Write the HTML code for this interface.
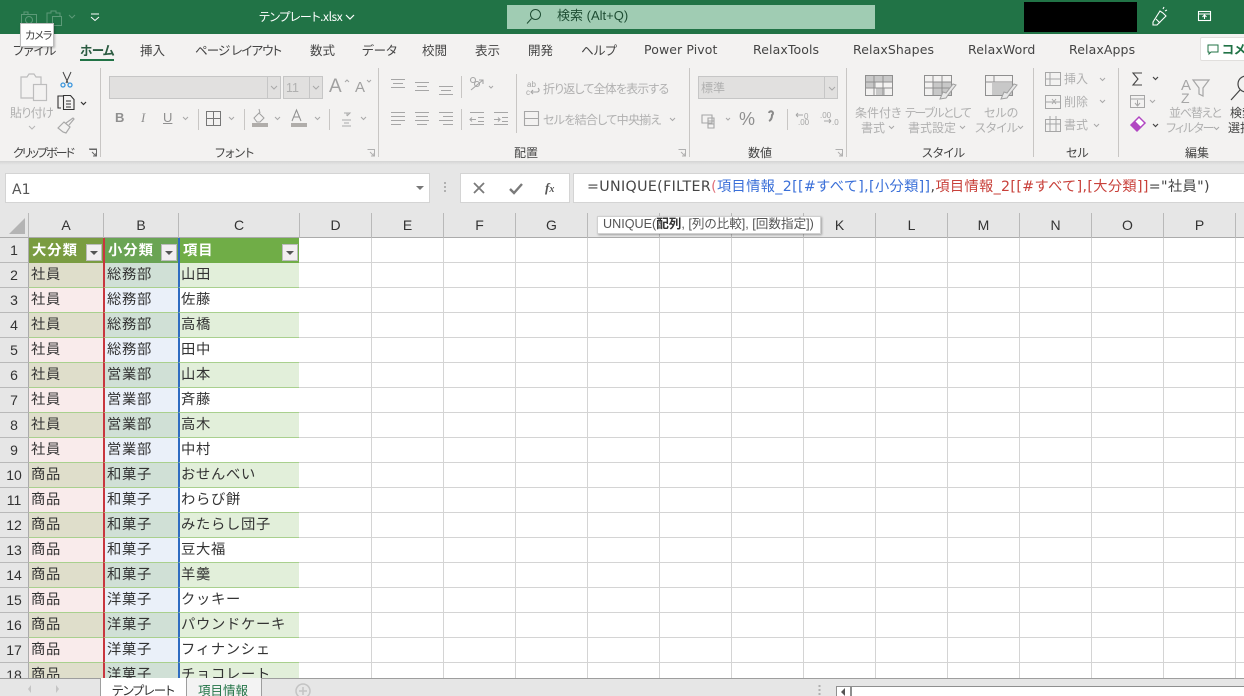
<!DOCTYPE html>
<html lang="ja"><head><meta charset="utf-8"><title>テンプレート.xlsx</title>
<style>
*{box-sizing:border-box}
html,body{margin:0;padding:0;width:1244px;height:696px;overflow:hidden;background:#fff}
body{position:relative;font-family:"Liberation Sans","Noto Sans CJK JP",sans-serif;color:#333}
.a{position:absolute}
.t{position:absolute;white-space:nowrap;line-height:16px;font-family:"Noto Sans CJK JP",sans-serif;font-feature-settings:"palt";font-size:12px}
.tab{font-size:12.5px;color:#444;top:42px}
.en{font-family:"DejaVu Sans",sans-serif;font-size:12.5px;font-feature-settings:normal;letter-spacing:.1px}
.g{color:#b0b0b0}
.lbl{top:145px;color:#444;font-size:12px}
.sep{position:absolute;width:1px;background:#c8c6c4}
.ch{position:absolute;top:213px;height:25px;line-height:25px;text-align:center;font-size:14px;color:#333;font-family:"Liberation Sans",sans-serif;border-right:1px solid #b9b9b9}
.rh{position:absolute;left:0;width:29px;height:25px;line-height:24px;text-align:center;font-size:14px;color:#333;background:#e6e6e6;border-bottom:1px solid #b9b9b9;border-right:1px solid #ababab;font-family:"Liberation Sans",sans-serif}
table{position:absolute;left:29px;top:238px;border-collapse:separate;border-spacing:0;table-layout:fixed;width:270px}
td{height:25px;padding:0 0 2px 2px;font-family:"Noto Sans CJK JP",sans-serif;font-size:14.3px;letter-spacing:.7px;line-height:22px;white-space:nowrap;overflow:hidden;border-bottom:1px solid #a9d08e;color:#333;position:relative}
.x1{background:#dfdecb}.x2{background:#f9ebeb}.y1{background:#d0e0d6;border-left:2px solid #c8363f;padding-left:2px}.y2{background:#eaf0f9;border-left:2px solid #c8363f;padding-left:2px}
.z1{background:#e2efda;border-left:2px solid #2f6cc1;padding-left:1px}.z2{background:#fff;border-left:2px solid #2f6cc1;padding-left:1px}
th{height:25px;padding:0 0 2px 3px;text-align:left;font-family:"Noto Sans CJK JP",sans-serif;font-size:14.3px;letter-spacing:1px;font-weight:700;color:#fff;position:relative;line-height:22px;overflow:hidden}
.fb{position:absolute;right:1px;top:6px;width:16px;height:17px;background:#f2eef0;border:1px solid #bbb}
.fb:after{content:"";position:absolute;left:3px;top:6px;border:4px solid transparent;border-top:4px solid #555;border-bottom:0}
</style></head><body>

<!-- title bar -->
<div class="a" style="left:0;top:0;width:1244px;height:34px;background:#217346"></div>
<div class="a" style="left:507px;top:5px;width:368px;height:24px;background:#a0ccb3"></div>
<div class="a" style="left:1024px;top:2px;width:113px;height:30px;background:#000"></div>
<div class="t" style="left:259px;top:9px;color:#fff;font-size:12px;letter-spacing:-.45px">テンプレート.xlsx</div>
<div class="t" style="left:557px;top:8px;color:#1e4d33;font-size:13px;font-family:'Liberation Sans','Noto Sans CJK JP',sans-serif;">検索 (Alt+Q)</div>

<!-- ribbon -->
<div class="a" style="left:0;top:34px;width:1244px;height:127px;background:#f3f2f1"></div>
<div class="a" style="left:0;top:161px;width:1244px;height:517px;background:#e6e6e6"></div>
<div class="a" style="left:0;top:161px;width:1244px;height:4px;background:linear-gradient(#d4d4d4,#e6e6e6)"></div>

<div class="t tab" style="left:13px">ファイル</div>
<div class="t tab" style="left:80px;font-weight:700;color:#2b5b41;letter-spacing:-.6px">ホーム</div>
<div class="a" style="left:80px;top:59px;width:34px;height:2px;background:#217346"></div>
<div class="t tab" style="left:140px">挿入</div>
<div class="t tab" style="left:195px;letter-spacing:-.9px">ページ レイアウト</div>
<div class="t tab" style="left:310px">数式</div>
<div class="t tab" style="left:362px">データ</div>
<div class="t tab" style="left:422px">校閲</div>
<div class="t tab" style="left:475px">表示</div>
<div class="t tab" style="left:528px">開発</div>
<div class="t tab" style="left:581px">ヘルプ</div>
<div class="t tab en" style="left:644px">Power Pivot</div>
<div class="t tab en" style="left:753px">RelaxTools</div>
<div class="t tab en" style="left:853px">RelaxShapes</div>
<div class="t tab en" style="left:968px">RelaxWord</div>
<div class="t tab en" style="left:1069px">RelaxApps</div>
<div class="a" style="left:1200px;top:37px;width:50px;height:24px;background:#fff;border:1px solid #e1dfdd;border-radius:2px"></div>
<div class="t" style="left:1222px;top:41px;font-weight:700;color:#217346;font-size:12.5px">コメント</div>

<!-- separators -->
<div class="sep" style="left:100px;top:68px;height:89px"></div>
<div class="sep" style="left:378px;top:68px;height:89px"></div>
<div class="sep" style="left:689px;top:68px;height:89px"></div>
<div class="sep" style="left:846px;top:68px;height:89px"></div>
<div class="sep" style="left:1033px;top:68px;height:89px"></div>
<div class="sep" style="left:1118px;top:68px;height:89px"></div>
<div class="sep" style="left:198px;top:109px;height:21px"></div>
<div class="sep" style="left:244px;top:109px;height:21px"></div>
<div class="sep" style="left:329px;top:109px;height:21px"></div>
<div class="sep" style="left:461px;top:76px;height:22px"></div>
<div class="sep" style="left:461px;top:109px;height:21px"></div>
<div class="sep" style="left:516px;top:74px;height:59px"></div>
<div class="sep" style="left:787px;top:109px;height:21px"></div>

<!-- combo boxes -->
<div class="a" style="left:109px;top:76px;width:172px;height:23px;background:#e1e0df;border:1px solid #c6c6c6"></div>
<div class="a" style="left:267px;top:76px;width:1px;height:23px;background:#c6c6c6"></div>
<div class="a" style="left:283px;top:76px;width:40px;height:23px;background:#e1e0df;border:1px solid #c6c6c6"></div>
<div class="a" style="left:309px;top:76px;width:1px;height:23px;background:#c6c6c6"></div>
<div class="t g" style="left:286px;top:80px;font-family:'Liberation Sans',sans-serif;font-size:12.5px">11</div>
<div class="a" style="left:698px;top:76px;width:140px;height:23px;background:#e1e0df;border:1px solid #c6c6c6"></div>
<div class="a" style="left:824px;top:76px;width:1px;height:23px;background:#c6c6c6"></div>
<div class="t g" style="left:701px;top:80px">標準</div>

<!-- ribbon text -->
<div class="t g" style="left:10px;top:105px;letter-spacing:-.7px">貼り付け</div>
<div class="t g" style="left:115px;top:110px;font:700 13px 'Liberation Sans',sans-serif;line-height:16px;color:#8f8f8f">B</div>
<div class="t g" style="left:141px;top:110px;font:italic 13px 'Liberation Serif',serif;line-height:16px;color:#8f8f8f">I</div>
<div class="t g" style="left:163px;top:110px;font:13px 'Liberation Sans',sans-serif;line-height:16px;color:#8f8f8f;text-decoration:underline">U</div>
<div class="t g" style="left:329px;top:78px;font:19px 'Liberation Sans',sans-serif;line-height:18px;color:#a0a0a0">A</div>
<div class="t g" style="left:355px;top:79px;font:15px 'Liberation Sans',sans-serif;line-height:18px;color:#a0a0a0">A</div>
<div class="t g" style="left:543px;top:81px;letter-spacing:-.85px">折り返して全体を表示する</div>
<div class="t g" style="left:543px;top:112px;letter-spacing:-.7px">セルを結合して中央揃え</div>
<div class="t g" style="left:739px;top:108px;font:18px 'Liberation Sans',sans-serif;line-height:22px;color:#8f8f8f">%</div>
<div class="t g" style="left:855px;top:105px">条件付き</div>
<div class="t g" style="left:861px;top:120px">書式</div>
<div class="t g" style="left:905px;top:105px;letter-spacing:-1.4px">テーブルとして</div>
<div class="t g" style="left:908px;top:120px">書式設定</div>
<div class="t g" style="left:984px;top:105px">セルの</div>
<div class="t g" style="left:975px;top:120px">スタイル</div>
<div class="t g" style="left:1064px;top:71px">挿入</div>
<div class="t g" style="left:1064px;top:94px">削除</div>
<div class="t g" style="left:1064px;top:117px">書式</div>
<div class="t g" style="left:1169px;top:105px;letter-spacing:-1.2px">並べ替えと</div>
<div class="t g" style="left:1166px;top:120px;letter-spacing:-1px">フィルター</div>
<div class="t" style="left:1230px;top:105px;color:#444">検索と</div>
<div class="t" style="left:1228px;top:120px;color:#444">選択</div>

<div class="t lbl" style="left:13px;letter-spacing:-2px">クリップボード</div>
<div class="t lbl" style="left:215px">フォント</div>
<div class="t lbl" style="left:514px">配置</div>
<div class="t lbl" style="left:748px">数値</div>
<div class="t lbl" style="left:922px">スタイル</div>
<div class="t lbl" style="left:1066px">セル</div>
<div class="t lbl" style="left:1185px">編集</div>

<!-- icons -->
<svg class="a" style="left:0;top:0" width="1244" height="165" viewBox="0 0 1244 165" fill="none">
 <!-- QAT -->
 <g stroke="#5d9a78" stroke-width="1">
  <rect x="21.5" y="14.5" width="15" height="12"/><circle cx="29" cy="20" r="3.5"/><path d="M24 14v-2h4v2"/>
  <path d="M49 25h-2V13h4v-2h5v2h4v3"/><rect x="52.5" y="16.5" width="9" height="9"/>
  <path d="M69 15l3 3 3-3"/>
 </g>
 <g stroke="#fff" stroke-width="1"><path d="M91 14h8M91 17l4 3.500 4-3.500"/><path d="M346 15l4 4 4-4" stroke-width="1.200"/></g>
 <!-- search icon -->
 <g stroke="#1e4d33" stroke-width="1"><circle cx="535.500" cy="14.500" r="5"/><path d="M531.500 18.500l-4.500 5"/></g>
 <!-- pen + window -->
 <g stroke="#fff" stroke-width="1.100"><path d="M1153 22l7-11 3 2 3 3-9 9-4 0zM1156 19l4 4M1163 9l1-2M1165 11l2-1"/>
 <rect x="1198.500" y="11.500" width="12" height="9"/><path d="M1198 14h13M1204.500 19v-4M1202.500 17l2-2 2 2"/></g>
 <!-- comment -->
 <path d="M1208 45h10v7h-7l-2 2v-2h-1z" stroke="#217346"/>
 <!-- clipboard -->
 <g stroke="#bdbdbd" stroke-width="1.200">
  <path d="M33 98H21V77h6l2-3h5l2 3h5v7"/><rect x="33.500" y="84.500" width="13" height="16" fill="#f3f2f1"/>
 </g>
 <path d="M29 126l3 3 3-3" stroke="#b5b5b5"/>
 <!-- scissors -->
 <g stroke="#444"><path d="M63 72l5 11M71 72l-5 11"/></g>
 <g stroke="#3a96dd" stroke-width="1.300"><circle cx="63" cy="85" r="2"/><circle cx="70" cy="85" r="2"/></g>
 <!-- copy -->
 <g stroke="#333" stroke-width="1.100"><path d="M61 108h-3V96h6"/><path d="M63.500 95.500h7l3.500 4v10h-10.500z" fill="#f3f2f1"/><path d="M66 101h5M66 104h5M66 107h5"/></g>
 <path d="M81 102l2.500 2.500 2.500-2.500" stroke="#333" stroke-width="1.200"/>
 <!-- brush -->
 <path d="M58 128l6-6 6 5-4 6-3-1zM66 123l7-5 1 1-5 6" stroke="#a8a8a8" stroke-width="1.200"/>
 <!-- combos arrows -->
 <g stroke="#a8a8a8"><path d="M271 86l3 3 3-3M313 86l3 3 3-3M829 87l3 3 3-3M183 117l2.500 2.500 2.500-2.500M229 117l2.500 2.500 2.500-2.500M275 117l2.500 2.500 2.500-2.500M315 117l2.500 2.500 2.500-2.500M361 117l2.500 2.500 2.500-2.500M489 86l2 2 2-2M670 118l2.500 2.500 2.500-2.500M726 118l2 2 2-2M1100 78l2.500 2.500 2.500-2.500M1100 100l2.500 2.500 2.500-2.500M1094 124l2.500 2.500 2.500-2.500M1150 100l2.500 2.500 2.500-2.500M1214 127l2.500 2.500 2.500-2.500M1018 126l2.500 2.500 2.500-2.500M960 126l2.500 2.500 2.500-2.500M889 126l2.500 2.500 2.500-2.500"/></g>
 <path d="M345 82l2-2 2 2M367 80l2 2 2-2" stroke="#a8a8a8"/>
 <!-- border icon -->
 <path d="M206.500 111.500h14v14h-14zM213.500 111v15M206 118.500h15" stroke="#777" stroke-width="1"/>
 <!-- fill -->
 <path d="M254 118l5-5 5 5-4 4h-3zM259 109l1 4" stroke="#a0a0a0"/><rect x="252" y="123" width="16" height="4" fill="#b0adaa"/>
 <!-- font color -->
 <path d="M292 121l4.500-11 4.500 11M294 117h5" stroke="#8f8f8f"/><rect x="291" y="123" width="16" height="4" fill="#b0adaa"/>
 <!-- phonetic -->
 <path d="M344 113h6l-3 3M347 113v3M342 120h9M344 123h5M342 126h9" stroke="#aaa"/>
 <!-- align top row -->
 <g stroke="#a6a6a6" stroke-width="1.100">
  <path d="M391 79.500h14M393 83.500h10M391 87.500h14"/>
  <path d="M415 82.500h14M417 86.500h10M415 90.500h14"/>
  <path d="M439 86.500h14M441 90.500h10M439 94.500h14"/>
  <path d="M391 112.500h14M391 116.500h14M391 120.500h14M391 124.500h10"/>
  <path d="M415 112.500h14M416 116.500h12M415 120.500h14M417 124.500h10"/>
  <path d="M439 112.500h14M443 116.500h10M439 120.500h14M443 124.500h10"/>
  <path d="M470 112.500h14M478 117.500h6M478 121.500h6M470 124.500h14M476 119.500h-6M472 117.500l-2 2 2 2"/>
  <path d="M494 112.500h14M502 117.500h6M502 121.500h6M494 124.500h14M494 119.500h6M498 117.500l2 2-2 2"/>
  <path d="M471 90l12-10M479 80h4v4"/>
  <circle cx="473" cy="80" r="2.500"/><circle cx="477" cy="84" r="2.500"/>
  <!-- wrap -->
  <path d="M531 92h7M533 90l-2 2 2 2M538 88c2 2 1 4-1 4"/>
  <!-- merge -->
  <path d="M524.500 111.500h14v14h-14zM524 118.500h15M528 118.500h6"/>
  <!-- number -->
  <path d="M702 115h10v8h-10zM708 118h6v10h-6zM708 121h6M708 124h6"/>
 </g>
 <text x="527" y="87" font-size="8" fill="#a6a6a6" font-family="Liberation Sans">ab</text>
 <text x="526" y="95" font-size="8" fill="#a6a6a6" font-family="Liberation Sans">c</text>
 <path d="M769 113a2 2 0 1 1 3 2c0 3-1 5-3 6" stroke="#8a8a8a" stroke-width="2"/>
 <g stroke="#a6a6a6"><path d="M796 115h7M796 115l2-2M796 115l2 2M824 121h7M831 121l-2-2M831 121l-2 2"/></g>
 <text x="804" y="119" font-size="8" fill="#a6a6a6" font-family="Liberation Sans">0</text>
 <text x="798" y="125" font-size="8" fill="#a6a6a6" font-family="Liberation Sans">.00</text>
 <text x="820" y="118" font-size="8" fill="#a6a6a6" font-family="Liberation Sans">.00</text>
 <text x="832" y="125" font-size="8" fill="#a6a6a6" font-family="Liberation Sans">.0</text>
 <!-- styles -->
 <g stroke="#8f8f8f">
  <rect x="865.500" y="75.500" width="27" height="20" fill="#f3f2f1"/><path fill="#c8c8c8" d="M866 76h26v6h-26zM866 82h10v6h-10zM876 88h9v7h-9z" stroke="none"/><path d="M865 82h28M865 88h28M874 76v20M883 76v20"/>
  <rect x="924.500" y="75.500" width="27" height="20" fill="#f3f2f1"/><path fill="#c8c8c8" d="M933 82h18v13h-18z" stroke="none"/><path d="M924 82h28M924 88h28M933 76v20M942 76v20"/>
  <rect x="985.500" y="75.500" width="27" height="20" fill="#f3f2f1"/><path fill="#c8c8c8" d="M992 83h20v12h-20z" stroke="none"/><path d="M985 82h28M994 76v6" />
 </g>
 <g stroke="#a0a0a0" fill="#e8e8e8"><path d="M953 84l-7 9-3-1-3 7 6-1 2-3 8-10z"/><path d="M1014 84l-7 9-3-1-3 7 6-1 2-3 8-10z"/></g>
 <!-- cell icons -->
 <g stroke="#a6a6a6">
  <path d="M1045.500 72.500h15v13h-15zM1050 72v14M1045 79h16M1052 79h-6"/>
  <path d="M1045.500 95.500h15v13h-15zM1045 102h16M1052 99l4 5M1056 99l-4 5"/>
  <path d="M1045.500 119.500h15v12h-15zM1050 116v16M1056 116v16M1045 124h16"/>
 </g>
 <!-- editing -->
 <path d="M1142 73h-9l5 6-5 6h9" stroke="#444" stroke-width="1.100"/>
 <path d="M1153 77l2.500 2.500 2.500-2.500M1153 124l2.500 2.500 2.500-2.500" stroke="#444" stroke-width="1.200"/>
 <path d="M1130.500 95.500h14v12h-14zM1131 99h13M1137.500 100v6M1135 103l2.500 3 2.500-3" stroke="#a6a6a6"/>
 <path d="M1131 125l8-8 6 6-8 8z" fill="#fff" stroke="#b146c2" stroke-width="1.500"/><path d="M1131 125l4-4 6 6-4 4z" fill="#b146c2"/>
 <!-- sort filter -->
 <text x="1181" y="90" font-size="15" fill="#a6a6a6" font-family="Liberation Sans">A</text>
 <text x="1181" y="103" font-size="14" fill="#a6a6a6" font-family="Liberation Sans">Z</text>
 <path d="M1193 80h16l-6 8v8l-4-2v-6z" stroke="#a6a6a6" stroke-width="1.200"/>
 <!-- find -->
 <circle cx="1246" cy="84" r="8" stroke="#444" stroke-width="1.200"/><path d="M1240 90l-9 10" stroke="#444" stroke-width="1.200"/>
 <!-- launchers -->
 <g stroke="#666"><path d="M89.500 149.500h7v7M89 149h8M92 152l4 4M96 153v3h-3"/></g>
 <g stroke="#b0b0b0"><path d="M367.500 149.500h7v7M370 152l4 4M374 153v3h-3"/><path d="M678.500 149.500h7v7M681 152l4 4M685 153v3h-3"/><path d="M835.500 149.500h7v7M838 152l4 4M842 153v3h-3"/></g>
</svg>

<!-- camera tooltip -->
<div class="a" style="left:20px;top:23px;width:34px;height:24px;background:#fff;border:1px solid #bdbdbd;box-shadow:1px 1px 2px rgba(0,0,0,.25)"></div>
<div class="t" style="left:25px;top:27px;font-size:11px;color:#444;letter-spacing:-1px">カメラ</div>

<!-- formula area -->
<div class="a" style="left:5px;top:173px;width:425px;height:30px;background:#fff;border:1px solid #d4d4d4"></div>
<div class="t" style="left:12px;top:182px;font:14px 'DejaVu Sans',sans-serif;line-height:16px;color:#555">A1</div>
<div class="a" style="left:416px;top:186px;border:4px solid transparent;border-top:4px solid #777;border-bottom:0"></div>
<div class="a" style="left:444px;top:182px;width:2px;height:12px;background:repeating-linear-gradient(#b0b0b0 0 2px,transparent 2px 4px)"></div>
<div class="a" style="left:460px;top:173px;width:110px;height:30px;background:#fff;border:1px solid #d4d4d4"></div>
<div class="a" style="left:573px;top:173px;width:671px;height:30px;background:#fff;border:1px solid #d4d4d4;border-right:0"></div>
<svg class="a" style="left:460px;top:173px" width="110" height="30" fill="none">
 <path d="M14 10l10 10M24 10l-10 10" stroke="#7a7a7a" stroke-width="1.800"/>
 <path d="M50 16l4 4 8-9" stroke="#7a7a7a" stroke-width="2.400"/>
 <text x="85" y="19" font-size="13" fill="#555" font-style="italic" font-weight="700" font-family="Liberation Serif">f<tspan font-size="10">x</tspan></text>
</svg>
<div class="t" style="left:587px;top:178px;font-size:14.2px;line-height:18px;font-feature-settings:normal;font-family:'DejaVu Sans','Noto Sans CJK JP',sans-serif;letter-spacing:.37px;color:#444">=UNIQUE(FILTER<span style="color:#e0707a">(</span><span style="color:#3a6fd8">項目情報_2[[#すべて],[小分類]]</span>,<span style="color:#c8403a">項目情報_2[[#すべて],[大分類]]</span>="社員")</div>

<!-- grid -->
<div class="a" style="left:0;top:238px;width:1244px;height:440px;background-color:#fff;background-image:repeating-linear-gradient(90deg,transparent 0 71px,#d4d4d4 71px 72px);background-position:300px 0;background-repeat:repeat"></div>
<div class="a" style="left:0;top:238px;width:1244px;height:440px;background-image:repeating-linear-gradient(180deg,transparent 0 24px,#d4d4d4 24px 25px)"></div>

<!-- column headers -->
<div class="a" style="left:0;top:213px;width:1244px;height:25px;background:#e6e6e6;border-bottom:1px solid #ababab"></div>
<div class="a" style="left:0;top:213px;width:29px;height:25px;background:#e6e6e6;border-right:1px solid #b9b9b9;border-bottom:1px solid #ababab"></div>
<div class="a" style="left:9px;top:218px;width:0;height:0;border-left:16px solid transparent;border-bottom:16px solid #b4b4b4"></div>
<div class="ch" style="left:29px;width:75px">A</div>
<div class="ch" style="left:104px;width:75px">B</div>
<div class="ch" style="left:179px;width:121px">C</div>
<div class="ch" style="left:300px;width:72px">D</div>
<div class="ch" style="left:372px;width:72px">E</div>
<div class="ch" style="left:444px;width:72px">F</div>
<div class="ch" style="left:516px;width:72px">G</div>
<div class="ch" style="left:588px;width:72px">H</div>
<div class="ch" style="left:660px;width:72px">I</div>
<div class="ch" style="left:732px;width:72px">J</div>
<div class="ch" style="left:804px;width:72px">K</div>
<div class="ch" style="left:876px;width:72px">L</div>
<div class="ch" style="left:948px;width:72px">M</div>
<div class="ch" style="left:1020px;width:72px">N</div>
<div class="ch" style="left:1092px;width:72px">O</div>
<div class="ch" style="left:1164px;width:72px">P</div>
<div class="ch" style="left:1236px;width:72px"></div>

<!-- row headers -->
<div class="rh" style="top:238px">1</div><div class="rh" style="top:263px">2</div><div class="rh" style="top:288px">3</div><div class="rh" style="top:313px">4</div><div class="rh" style="top:338px">5</div><div class="rh" style="top:363px">6</div><div class="rh" style="top:388px">7</div><div class="rh" style="top:413px">8</div><div class="rh" style="top:438px">9</div><div class="rh" style="top:463px">10</div><div class="rh" style="top:488px">11</div><div class="rh" style="top:513px">12</div><div class="rh" style="top:538px">13</div><div class="rh" style="top:563px">14</div><div class="rh" style="top:588px">15</div><div class="rh" style="top:613px">16</div><div class="rh" style="top:638px">17</div><div class="rh" style="top:663px">18</div>

<!-- table -->
<table>
<colgroup><col style="width:74px"><col style="width:75px"><col style="width:121px"></colgroup>
<tr><th style="background:#7a9c41">大分類<span class="fb"></span></th><th style="background:#6aa454;border-left:2px solid #c8363f">小分類<span class="fb"></span></th><th style="background:#70ad47;border-left:2px solid #2f6cc1">項目<span class="fb"></span></th></tr>
<tr><td class="x1">社員</td><td class="y1">総務部</td><td class="z1">山田</td></tr>
<tr><td class="x2">社員</td><td class="y2">総務部</td><td class="z2">佐藤</td></tr>
<tr><td class="x1">社員</td><td class="y1">総務部</td><td class="z1">高橋</td></tr>
<tr><td class="x2">社員</td><td class="y2">総務部</td><td class="z2">田中</td></tr>
<tr><td class="x1">社員</td><td class="y1">営業部</td><td class="z1">山本</td></tr>
<tr><td class="x2">社員</td><td class="y2">営業部</td><td class="z2">斉藤</td></tr>
<tr><td class="x1">社員</td><td class="y1">営業部</td><td class="z1">高木</td></tr>
<tr><td class="x2">社員</td><td class="y2">営業部</td><td class="z2">中村</td></tr>
<tr><td class="x1">商品</td><td class="y1">和菓子</td><td class="z1">おせんべい</td></tr>
<tr><td class="x2">商品</td><td class="y2">和菓子</td><td class="z2">わらび餅</td></tr>
<tr><td class="x1">商品</td><td class="y1">和菓子</td><td class="z1">みたらし団子</td></tr>
<tr><td class="x2">商品</td><td class="y2">和菓子</td><td class="z2">豆大福</td></tr>
<tr><td class="x1">商品</td><td class="y1">和菓子</td><td class="z1">羊羹</td></tr>
<tr><td class="x2">商品</td><td class="y2">洋菓子</td><td class="z2">クッキー</td></tr>
<tr><td class="x1">商品</td><td class="y1">洋菓子</td><td class="z1">パウンドケーキ</td></tr>
<tr><td class="x2">商品</td><td class="y2">洋菓子</td><td class="z2">フィナンシェ</td></tr>
<tr><td class="x1">商品</td><td class="y1">洋菓子</td><td class="z1">チョコレート</td></tr>
</table>

<!-- formula tooltip -->
<div class="a" style="left:597px;top:216px;width:224px;height:18px;background:#fff;border:1px solid #d0d0d0;box-shadow:1px 1px 2px rgba(0,0,0,.3)"></div>
<div class="t" style="left:603px;top:216px;font-size:12.6px;color:#555;font-family:'Liberation Sans','Noto Sans CJK JP',sans-serif">UNIQUE(<span style="color:#333;font-weight:700">配列</span>, [列の比較], [回数指定])</div>

<!-- sheet tabs -->
<div class="a" style="left:0;top:678px;width:1244px;height:18px;background:#e6e6e6;border-top:1px solid #9e9e9e"></div>
<div class="a" style="left:100px;top:678px;width:87px;height:18px;background:#fff;border-left:1px solid #9e9e9e;border-right:1px solid #9e9e9e"></div>
<div class="a" style="left:187px;top:678px;width:75px;height:18px;background:#f3f3f3;border-right:1px solid #9e9e9e"></div>
<div class="t" style="left:112px;top:682px;font-size:12.5px;color:#333;letter-spacing:-.7px">テンプレート</div>
<div class="t" style="left:198px;top:682px;font-size:12.5px;color:#217346;font-feature-settings:normal">項目情報</div>
<svg class="a" style="left:0;top:678px" width="1244" height="18" fill="none">
 <path d="M31 7l-3 4 3 4zM56 7l3 4-3 4z" fill="#c4c4c4"/>
 <circle cx="303" cy="13" r="7" stroke="#c4c4c4" stroke-width="1.500"/><path d="M299 13h8M303 9v8" stroke="#c4c4c4" stroke-width="1.500"/>
 <path d="M819.500 7v2M819.500 11v2M819.500 15v2" stroke="#b0b0b0" stroke-width="2"/>
</svg>
<div class="a" style="left:836px;top:686px;width:408px;height:10px;background:#fff;border:1px solid #8f8f8f;border-bottom:0;border-right:0"></div>
<div class="a" style="left:850px;top:686px;width:394px;height:10px;background:#fff;border-left:2px solid #8f8f8f;border-top:1px solid #8f8f8f"></div>
<div class="a" style="left:841px;top:688px;border:4px solid transparent;border-right:4px solid #555;border-left:0"></div>
</body></html>
